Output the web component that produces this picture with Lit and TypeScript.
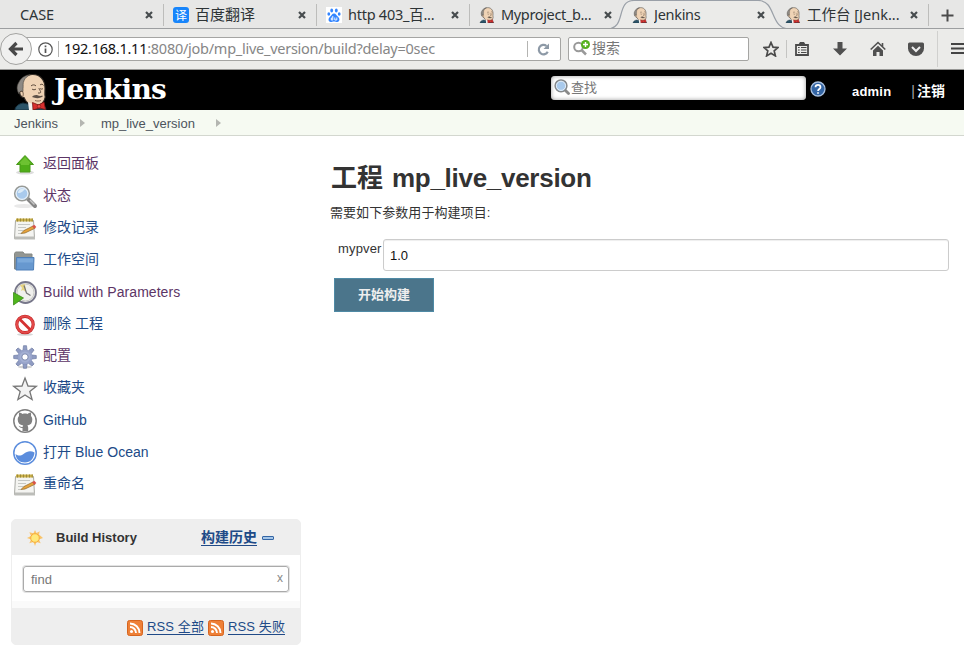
import { LitElement, html, svg, css, nothing } from "lit";
import { customElement } from "lit/decorators.js";
import { classMap } from "lit/directives/class-map.js";

const butler = (cls: string) => html`<svg class=${cls} viewBox="0 0 34 37">
  <path d="M1 37c0-3 3-6 8-7l9 2h9c3 0 5 2 5 5z" fill="#2c5468" stroke="#16303e" />
  <path d="M6 17C5 8 10 2 18 1.500 26 1 31 7 31 15c0 4-.500 6 .200 9-.700 5-4.200 8-9.200 8.500-6 .300-10-3-12-8-4 0-5-5-4-7.500z" fill="#efd3b5" stroke="#332c26" stroke-width="1.100" />
  <path d="M5 21C2 16 3 12 5 9 7 5 11 2 16 1.700c-3 2-5 3-6 6-1.500 2.500-.500 5-1 8l0 3c-2-1-4 0-4 2.300z" fill="#8d8984" stroke="#443f39" stroke-width=".6" />
  <path d="M6 19c2-2 4 0 3 4" fill="none" stroke="#5b4635" stroke-width=".8" />
  <path d="M17 13c1-1.500 4-1.500 5 0M26 12c1-1.200 3-1 3.500.500M18 16c1 1 3 1 4 0M26 15.500c1 .800 2 .800 3 0M25 15c0 2 3 4 1 5h-2" fill="none" stroke="#3b2b20" stroke-width=".8" />
  <path d="M18 24c1-1.500 4-2.500 6-1.500s4 0 5 .5c-2 2.500-7 2.800-11 1z" fill="#5e5249" />
  <path d="M21 27.500c2 .700 4 .700 6 0" fill="none" stroke="#75513b" stroke-width=".8" />
  <path d="M14 29l9 4-4 4h-4z" fill="#f4f4f2" />
  <path d="M18.500 29.500l6 2.500 5.500-3 1.500 7.500-6-1.500-6.500 2z" fill="#d8302f" stroke="#7c1614" stroke-width=".8" />
  <circle cx="25" cy="33.300" r="1.800" fill="#ef4a46" stroke="#7c1614" stroke-width=".6" />
</svg>`;

const notepad = svg`<path d="M2.500 3.500h18l1 18h-20z" fill="#f4f4f1" stroke="#a9aaa5"/><path d="M1.500 19.500h20.500v3H1.500z" fill="#bcbdb9"/><path d="M3 1.500h17v3H3z" fill="#cbb04a"/><path d="M4.500 1.500v3M7.500 1.500v3M10.500 1.500v3M13.500 1.500v3M16.500 1.500v3M19.200 1.500v3" stroke="#9a8a3a"/><path d="M5 7.500h12M5 10.500h8M5 13.500h6M5 16.500h3" stroke="#c6c8c4"/><path d="M8 16.500l3-3 9-4.500 1.800 2.300-9.800 4.700z" fill="#e7a33c" stroke="#8c6526" stroke-width=".7"/><path d="M19 9.300l2.300-1.500 2 2.300-1.800 1.700z" fill="#d8524b"/>`;
const magnifier = svg`<ellipse cx="11" cy="21" rx="10" ry="2" fill="#e9e9e9"/><path d="M15 14l7 7" stroke="#868686" stroke-width="4" stroke-linecap="round"/><path d="M17 15l4.500 4.500" stroke="#c6c6c6" stroke-width="1.500"/><circle cx="9" cy="8.500" r="7.300" fill="#a9caec" stroke="#999b97" stroke-width="1.600"/><circle cx="9" cy="8.500" r="5.900" fill="none" stroke="#e9f1f8" stroke-width="1.200"/><path d="M5 8c0-4 4-5 7-4-2 2-3 4-7 4z" fill="#dcebf7"/>`;
const searchLens = svg`<path d="M10.500 10.500l4 4" stroke="#8a8a8a" stroke-width="2.800" stroke-linecap="round"/><circle cx="7" cy="6.800" r="5.900" fill="#a9caec" stroke="#85888a" stroke-width="1.500"/><circle cx="7" cy="6.800" r="4.600" fill="none" stroke="#e4eef8" stroke-width="1"/>`;

const gearTeeth = [0, 45, 90, 135, 180, 225, 270, 315];

const tasks: { label: string; visited?: boolean; icon: unknown }[] = [
  { label: "返回面板", visited: true, icon: svg`<ellipse cx="12" cy="19.500" rx="9" ry="2" fill="#ddd"/><path d="M12 2.500l8.500 9H17v7.500H7v-7.500H3.500z" fill="#4fae18" stroke="#4a9a1a"/><path d="M12 4l6 6.500h-2V12H8v-1.500H6z" fill="#6dc231"/>` },
  { label: "状态", visited: true, icon: magnifier },
  { label: "修改记录", icon: notepad },
  { label: "工作空间", icon: svg`<path d="M1.500 20V4.500l1-1.500H10l1.500 2H19v15z" fill="#939692" stroke="#858884"/><path d="M3.500 8.500h17.500l-.500 12.500H3z" fill="#6798cf" stroke="#4e7fb8"/><path d="M4.500 9.500h15.500v4H4.500z" fill="#7ba9da"/>` },
  { label: "Build with Parameters", visited: true, icon: svg`<circle cx="12.500" cy="11.500" r="10.500" fill="#f0f0ed" stroke="#77778a" stroke-width="1.800"/><circle cx="12.500" cy="11.500" r="8.500" fill="none" stroke="#c6c7c4"/><path d="M7 4l5-1 1 8-3-2-2 1 1-3z" fill="#e8d581"/><path d="M11 4.500l2.500 7.500 4 2.500" fill="none" stroke="#777" stroke-width="1.200"/><path d="M.500 11.500l10 5.500-10 7z" fill="#4fb51c" stroke="#3e8d1c" stroke-width=".8"/>` },
  { label: "删除 工程", icon: svg`<ellipse cx="12" cy="21.500" rx="8" ry="1.300" fill="#d6d6d6"/><circle cx="12" cy="11.500" r="8.200" fill="#fff" stroke="#c22525" stroke-width="3.200"/><circle cx="12" cy="11.500" r="8.200" fill="none" stroke="#e34a4a" stroke-width="2"/><path d="M6.500 6l11 11" stroke="#d43232" stroke-width="2.800"/>` },
  { label: "配置", visited: true, icon: svg`<ellipse cx="12" cy="22" rx="7" ry="1.300" fill="#d2d2d2"/>${gearTeeth.map((a) => svg`<path d="M10 5l.500-4.300h3l.500 4.300z" fill="#8f9bc2" stroke="#6f7ca3" stroke-width=".7" transform="rotate(${a} 12 12)"/>`)}<circle cx="12" cy="12" r="7.600" fill="#97a3c9"/><circle cx="12" cy="12" r="5.500" fill="#a4b0d3"/><circle cx="12" cy="12" r="3.200" fill="#fff" stroke="#7986ad"/>` },
  { label: "收藏夹", icon: svg`<path d="M12 1l3 8 8.300.300-6.500 5.200 2.300 8L12 18l-7.100 4.500 2.300-8L.700 9.300 9 9z" fill="#f3f3f3" stroke="#777" stroke-width="1.300"/>` },
  { label: "GitHub", icon: svg`<circle cx="12" cy="12" r="11.200" fill="#fff" stroke="#808080" stroke-width="1.500"/><path d="M9.500 22v-3c-2 .500-3-1-4-2.200 1.700 0 2 1.700 4 1.200l.700-1.500C6.700 16 4.700 14 4.700 10.500c0-1.500.500-2.700 1.300-3.600-.200-1-.200-2.400.200-3.400 1.400 0 2.500.800 3.300 1.400 1.700-.400 3.300-.400 5 0 .800-.600 1.900-1.400 3.300-1.400.400 1 .400 2.400.200 3.400.8.900 1.300 2.100 1.300 3.600 0 3.500-1.500 5.500-5 6 .700.700.900 1.600.9 2.500v3z" fill="#808080"/>` },
  { label: "打开 Blue Ocean", icon: svg`<circle cx="12" cy="12" r="11.200" fill="#fff" stroke="#5b8ddd" stroke-width="1.500"/><path d="M2.500 13c3 2 5 2 8 0 4-3 7-3.500 11-1.500-.500 6-4 10-9.500 10s-9-3.500-9.500-8.500z" fill="#5b8ddd"/>` },
  { label: "重命名", icon: notepad },
];

const baidu = html`<svg class="fav" viewBox="0 0 16 16"><path fill="#fff" d="M0 0h16v16H0z"/><g fill="#3385ff"><ellipse cx="5.700" cy="3.400" rx="1.400" ry="2"/><ellipse cx="10.300" cy="3.400" rx="1.400" ry="2"/><ellipse cx="2.800" cy="7" rx="1.400" ry="1.800"/><ellipse cx="13.200" cy="7" rx="1.400" ry="1.800"/><path d="M8 6.500c2 0 2.500 2 4 3.300 2 1.700 2 5-.700 5.200-1.300 0-2-.500-3.300-.500s-2 .500-3.300.500C2 14.800 2 11.500 4 9.800 5.500 8.500 6 6.500 8 6.500z"/></g><path d="M6.800 9v4H5.300v-2h1.500M8.800 10.500V13h2v-2.500" fill="none" stroke="#fff" stroke-width=".9"/></svg>`;

const tabs = [
  { title: "CASE", cls: "t-case", icon: nothing },
  { title: "百度翻译", cls: "t-cjk", icon: html`<span class="fav trans">译</span>` },
  { title: "http 403_百...", cls: "t-http", icon: baidu },
  { title: "Myproject_b...", cls: "t-my", icon: butler("fav") },
  { title: "Jenkins", cls: "t-jen", icon: butler("fav") },
  { title: "工作台 [Jenk...", cls: "t-work", icon: butler("fav") },
];

@customElement("browser-chrome")
class BrowserChrome extends LitElement {
  static styles = css`
    :host { display: block; height: 70px; box-sizing: border-box; background: #ebebe9; border-bottom: 1px solid #979795; color: #2e3436; font: 14.500px/20px "Noto Sans", "Noto Sans CJK SC", sans-serif; white-space: nowrap; }
    .strip { position: relative; height: 28px; border-bottom: 1px solid #9c9ea0; display: flex; padding-left: 10px; box-sizing: content-box; overflow: hidden; background: #e7e7e6; }
    .shape { position: absolute; left: 600px; top: 0; width: 200px; height: 29px; }
    .tab { position: relative; flex: none; width: 153px; height: 28px; box-sizing: border-box; display: flex; align-items: center; padding: 2px 10px 0 10px; }
    .tab::after { content: ""; position: absolute; right: -1px; top: 4px; height: 22px; width: 1px; background: #bdbdbb; }
    .tab.clear::after { display: none; }
    .title { flex: 1; overflow: hidden; margin-top: -2px; }
    .fav { flex: none; width: 16px; height: 16px; margin-right: 6px; }
    .trans { background: #1785fb; color: #fff; border-radius: 3px; font: 12px/16px "Noto Sans CJK SC", sans-serif; text-align: center; }
    .x { flex: none; width: 8px; height: 8px; }
    .plus { margin: 9px 0 0 13px; width: 13px; height: 13px; flex: none; }
    .t-case { letter-spacing: -.1px; }
    .t-cjk { font-size: 15px; }
    .t-http { letter-spacing: -.25px; }
    .t-my { letter-spacing: -.35px; }
    .t-jen { letter-spacing: -.3px; }
    .bar { display: flex; height: 40px; align-items: center; position: relative; }
    .back { width: 32px; height: 32px; position: relative; flex: none; z-index: 1; }
    .url { flex: none; margin-left: -10px; width: 539px; height: 24px; box-sizing: border-box; border: 1px solid #a5a5a3; background: #fff; border-radius: 2px; display: flex; align-items: center; padding-left: 15px; }
    .info { width: 15px; height: 15px; flex: none; }
    .vs { width: 1px; height: 16px; background: #b4b4b2; margin-left: 5px; }
    .addr { margin-left: 5px; margin-top: -2px; flex: 1; color: #868686; font-size: 14.500px; letter-spacing: -.26px; }
    .addr b { color: #111; font-weight: 400; }
    .reload { flex: none; width: 13px; height: 13px; margin: 0 10px 0 9px; }
    .find { flex: none; margin-left: 7px; width: 181px; height: 24px; box-sizing: border-box; border: 1px solid #a5a5a3; background: #fff; border-radius: 2px; display: flex; align-items: center; color: #777; padding: 0 0 2px 4px; font-size: 14px; }
    .find svg { width: 18px; height: 16px; margin-right: 1px; }
    .ico { flex: none; width: 16px; height: 16px; }
    .star { margin-left: 14px; }
    .s1 { flex: none; width: 1px; height: 18px; background: #c4c4c2; margin: 0 7px 0 7px; }
    .gap { margin-left: 22px; }
    .s2 { flex: none; width: 1px; height: 36px; background: #d0d0ce; margin: 0 13px 0 13px; }
  `;

  render() {
    return html`
      <div class="strip">
        <svg class="shape" viewBox="0 0 200 29"><path d="M7 29C27 29 15 .500 34 .500H158C177 .500 169 29 190 29z" fill="#ebebe9" stroke="#9aa0a8" stroke-width="1.200" /></svg>
        ${tabs.map((t, i) => html`<div class=${classMap({ tab: true, clear: i === 3 || i === 4 })}>
          ${t.icon}<span class="title ${t.cls}">${t.title}</span>
          <svg class="x" viewBox="0 0 8 8"><path d="M1 1l6 6M7 1L1 7" stroke="#474c4e" stroke-width="2.200" /></svg>
        </div>`)}
        <svg class="plus" viewBox="0 0 13 13"><path d="M6.500 .500v12M.500 6.500h12" stroke="#4a4a4a" stroke-width="2" /></svg>
      </div>
      <div class="bar">
        <svg class="back" viewBox="0 0 32 32"><circle cx="16" cy="16" r="15.500" fill="#f0f0ef" stroke="#a3a3a1" /><path d="M16.500 10L10.500 16l6 6M11 16h12" fill="none" stroke="#484848" stroke-width="3.200" /></svg>
        <div class="url">
          <svg class="info" viewBox="0 0 15 15"><circle cx="7.500" cy="7.500" r="6.700" fill="none" stroke="#555" stroke-width="1.200" /><path d="M7.500 6.500V11M7.500 3.500v1.700" stroke="#555" stroke-width="1.700" /></svg>
          <span class="vs"></span>
          <span class="addr"><b>192.168.1.11</b>:8080/job/mp_live_version/build?delay=0sec</span>
          <span class="vs"></span>
          <svg class="reload" viewBox="0 0 13 13"><path d="M10.700 8.700A4.700 4.700 0 1 1 9.500 3" fill="none" stroke="#8d99a6" stroke-width="2.200" /><path d="M12 .500V6H6.500z" fill="#8d99a6" /></svg>
        </div>
        <div class="find">
          <svg viewBox="0 0 18 16"><circle cx="5.500" cy="7" r="4.300" fill="none" stroke="#999" stroke-width="2" /><path d="M8.500 10l4.500 4.500" stroke="#999" stroke-width="2.500" /><circle cx="12.500" cy="4.500" r="4.500" fill="#56b01f" /><path d="M12.500 2v5M10 4.500h5" stroke="#fff" stroke-width="1.400" /></svg>搜索
        </div>
        <svg class="ico star" viewBox="0 0 16 16"><path d="M8 1.500l2 4.700 5 .4-3.800 3.300 1.200 5L8 12.200l-4.400 2.700 1.200-5L1 6.600l5-.4z" fill="none" stroke="#4a4a4a" stroke-width="1.700" /></svg>
        <span class="s1"></span>
        <svg class="ico" viewBox="0 0 16 16"><path d="M2 4h12v10H2z" fill="none" stroke="#4a4a4a" stroke-width="1.800" /><path d="M4.500 3.500L6 1h4l1.500 2.500z" fill="#4a4a4a" /><path d="M4 6.500h1.700M7 6.500h5.500M4 9h1.700M7 9h5.500M4 11.500h1.700M7 11.500h5.500" stroke="#4a4a4a" stroke-width="1.200" /></svg>
        <svg class="ico gap" viewBox="0 0 16 16"><path d="M5.500 1h5v6.500H15l-7 7-7-7h4.500z" fill="#505050" /></svg>
        <svg class="ico gap" viewBox="0 0 16 16"><path d="M.700 8.500L8 1.500l7.300 7M12.500 2v4" fill="none" stroke="#505050" stroke-width="1.600" /><path d="M3 9.500l5-4.800 5 4.800V15H9.500v-4h-3v4H3z" fill="#505050" /></svg>
        <svg class="ico gap" viewBox="0 0 16 16"><path d="M1.500 1.500h13q1.500 0 1.500 1.500v4.500a8 7.500 0 0 1-16 0V3q0-1.500 1.500-1.500z" fill="#505050" /><path d="M4 6l4 4 4-4" fill="none" stroke="#eee" stroke-width="2" /></svg>
        <span class="s2"></span>
        <svg class="ico" viewBox="0 0 16 16"><path d="M0 3h16M0 7.500h16M0 12h16" stroke="#444" stroke-width="2.200" /></svg>
      </div>`;
  }
}

@customElement("app-root")
class AppRoot extends LitElement {
  static styles = css`
    :host { display: block; width: 964px; height: 662px; overflow: hidden; background: #fff; color: #333; font: 13px/18px "Liberation Sans", "Noto Sans CJK SC", sans-serif; white-space: nowrap; }
    .head { height: 40px; background: #000; display: flex; align-items: flex-start; color: #fff; font-weight: 700; }
    .logo { flex: none; width: 34px; height: 37px; margin: 3px 0 0 14px; }
    .brand { flex: none; width: 500px; margin-left: 6px; font: 700 28px/40px "DejaVu Serif", serif; letter-spacing: -.800px; height: 40px; }
    .search { flex: none; margin-left: -3px; margin-top: 6px; width: 255px; height: 24px; box-sizing: border-box; border-radius: 4px; background: #fff; box-shadow: inset 0 0 4px #999; display: flex; align-items: center; padding-left: 3px; color: #777; font-weight: 400; }
    .search svg { width: 16px; height: 16px; margin: -2px 1px 0 0; }
    .help { flex: none; width: 16px; height: 16px; margin: 11px 0 0 4px; }
    .user { margin: 13px 0 0 26px; letter-spacing: .2px; }
    .logout { margin: 12px 0 0 20px; font-size: 14px; }
    .pipe { font-weight: 400; color: #aaa; margin-right: 2px; }
    .crumbs { height: 25px; border-bottom: 1px solid #d3d7cf; background: #f6faf2; display: flex; align-items: center; padding-left: 14px; color: #4d545d; }
    .crumbs span { width: 66px; padding-top: 2px; }
    .crumbs .second { width: 115px; }
    .crumbs svg { width: 5px; height: 8px; margin-right: 16px; }
    .main { display: flex; align-items: flex-start; }
    .side { width: 290px; margin-left: 11px; padding-top: 12px; }
    .task { height: 32px; display: flex; align-items: center; padding-left: 2px; font-size: 14px; color: #204a87; }
    .task span { margin-top: -2px; }
    .task span.latin { letter-spacing: .05px; margin-top: 0; }
    .task.visited { color: #5c3566; }
    .task svg { width: 24px; height: 24px; margin: 1px 6px 0 0; overflow: visible; }
    .history { margin-top: 19px; border-radius: 5px; background: #eee; height: 126px; overflow: hidden; box-sizing: border-box; border: 1px solid #eee; }
    .title { height: 35px; display: flex; align-items: center; font-weight: 700; }
    .title .sun { width: 16px; height: 16px; margin: 1px 13px 0 15px; }
    .title .name { width: 145px; }
    .title .trend { color: #204a87; border-bottom: 1px solid #204a87; font-size: 14px; line-height: 15px; height: 15px; }
    .title .minus { width: 12px; height: 4px; box-sizing: border-box; border: 1px solid #3465a4; border-radius: 1px; background: #a5c6e8; margin-left: 5px; margin-top: 1px; }
    .body { height: 46px; background: #fff; padding: 11px 11px 0; box-sizing: border-box; }
    .filter { height: 26px; box-sizing: border-box; border: 1px solid #aaa; border-radius: 3px; box-shadow: 0 0 0 1px #e3e3e3; display: flex; justify-content: space-between; align-items: center; color: #777; padding: 2px 5px 0 7px; }
    .filter i { font-style: normal; font-size: 12px; color: #888; margin-top: -4px; }
    .band { height: 7px; background: #fafafa; }
    .rss { display: flex; align-items: center; justify-content: flex-end; height: 36px; padding: 1px 15px 0 0; color: #204a87; }
    .rss svg { width: 16px; height: 16px; margin-right: 4px; margin-top: 2px; }
    .rss a { border-bottom: 1px solid #204a87; line-height: 15px; height: 15px; letter-spacing: .1px; }
    .rss a.first { margin-right: 4px; }
    .content { width: 619px; margin-left: 29px; padding-top: 26px; }
    h1 { margin: 0 0 0 1px; font: 700 26px/32px "Liberation Sans", "Noto Sans CJK SC", sans-serif; }
    h1 span { letter-spacing: -.28px; margin-left: 2px; }
    .note { margin: 10px 0 0; height: 18px; letter-spacing: .06px; }
    .param { display: flex; margin: 17px 0 0 8px; }
    .param label { width: 45px; padding-top: 1px; letter-spacing: .15px; }
    .value { width: 566px; height: 32px; box-sizing: border-box; border: 1px solid #ccc; border-radius: 3px; padding: 0 6px; line-height: 31px; color: #111; box-shadow: inset 0 1px 1px #eee; }
    .build { margin: 7px 0 0 4px; width: 100px; height: 34px; box-sizing: border-box; border: 1px solid #4f8aa5; background: #4b758b; color: #eee; font: 700 13px/32px "Liberation Sans", "Noto Sans CJK SC", sans-serif; text-align: center; }
  `;

  render() {
    const arrow = html`<svg viewBox="0 0 5 8"><path d="M0 0l5 4-5 4z" fill="#b4b6b1" /></svg>`;
    const feed = html`<svg viewBox="0 0 16 16"><rect x=".500" y=".500" width="15" height="15" rx="2" fill="#ee8037" stroke="#d6641e" /><circle cx="4.500" cy="11.500" r="1.500" fill="#fff" /><path d="M3 7a6 6 0 0 1 6 6M3 3.500A9.500 9.500 0 0 1 12.500 13" fill="none" stroke="#fff" stroke-width="1.900" /></svg>`;
    return html`
      <browser-chrome></browser-chrome>
      <div class="head">
        ${butler("logo")}
        <span class="brand">Jenkins</span>
        <div class="search"><svg viewBox="0 0 16 16">${searchLens}</svg>查找</div>
        <svg class="help" viewBox="0 0 16 16"><circle cx="8" cy="8" r="7" fill="#3465a4" stroke="#a8c0e0" stroke-width="1.300" /><path d="M5.500 6.200c0-3.200 5-3.200 5 0C10.500 8 8 8 8 10M8 11.200v1.600" fill="none" stroke="#fff" stroke-width="1.700" /></svg>
        <span class="user">admin</span>
        <span class="logout"><span class="pipe">|</span>注销</span>
      </div>
      <div class="crumbs"><span>Jenkins</span>${arrow}<span class="second">mp_live_version</span>${arrow}</div>
      <div class="main">
        <div class="side">
          ${tasks.map((t) => html`<div class=${classMap({ task: true, visited: !!t.visited })}><svg viewBox="0 0 24 24">${t.icon}</svg><span class=${classMap({ latin: /[A-Z]/.test(t.label) })}>${t.label}</span></div>`)}
          <div class="history">
            <div class="title">
              <svg class="sun" viewBox="0 0 16 16"><path d="M8 0l1.500 3 3.200-1.700-.700 3.200L16 8l-4 1.500 1.700 3.800-4.200-1.300L8 16l-1.500-4-4.200 1.300L4 9.500 0 8l4-2L2.300 2.300l4.200 1z" fill="#f9c46a" /><circle cx="8" cy="8" r="4.300" fill="#ffe97a" stroke="#f7ac3c" /></svg>
              <span class="name">Build History</span><span class="trend">构建历史</span><span class="minus"></span>
            </div>
            <div class="body"><div class="filter">find<i>x</i></div></div>
            <div class="band"></div>
            <div class="rss">${feed}<a class="first">RSS 全部</a>${feed}<a>RSS 失败</a></div>
          </div>
        </div>
        <div class="content">
          <h1>工程<span> mp_live_version</span></h1>
          <p class="note">需要如下参数用于构建项目:</p>
          <div class="param"><label>mypver</label><div class="value">1.0</div></div>
          <div class="build">开始构建</div>
        </div>
      </div>`;
  }
}
